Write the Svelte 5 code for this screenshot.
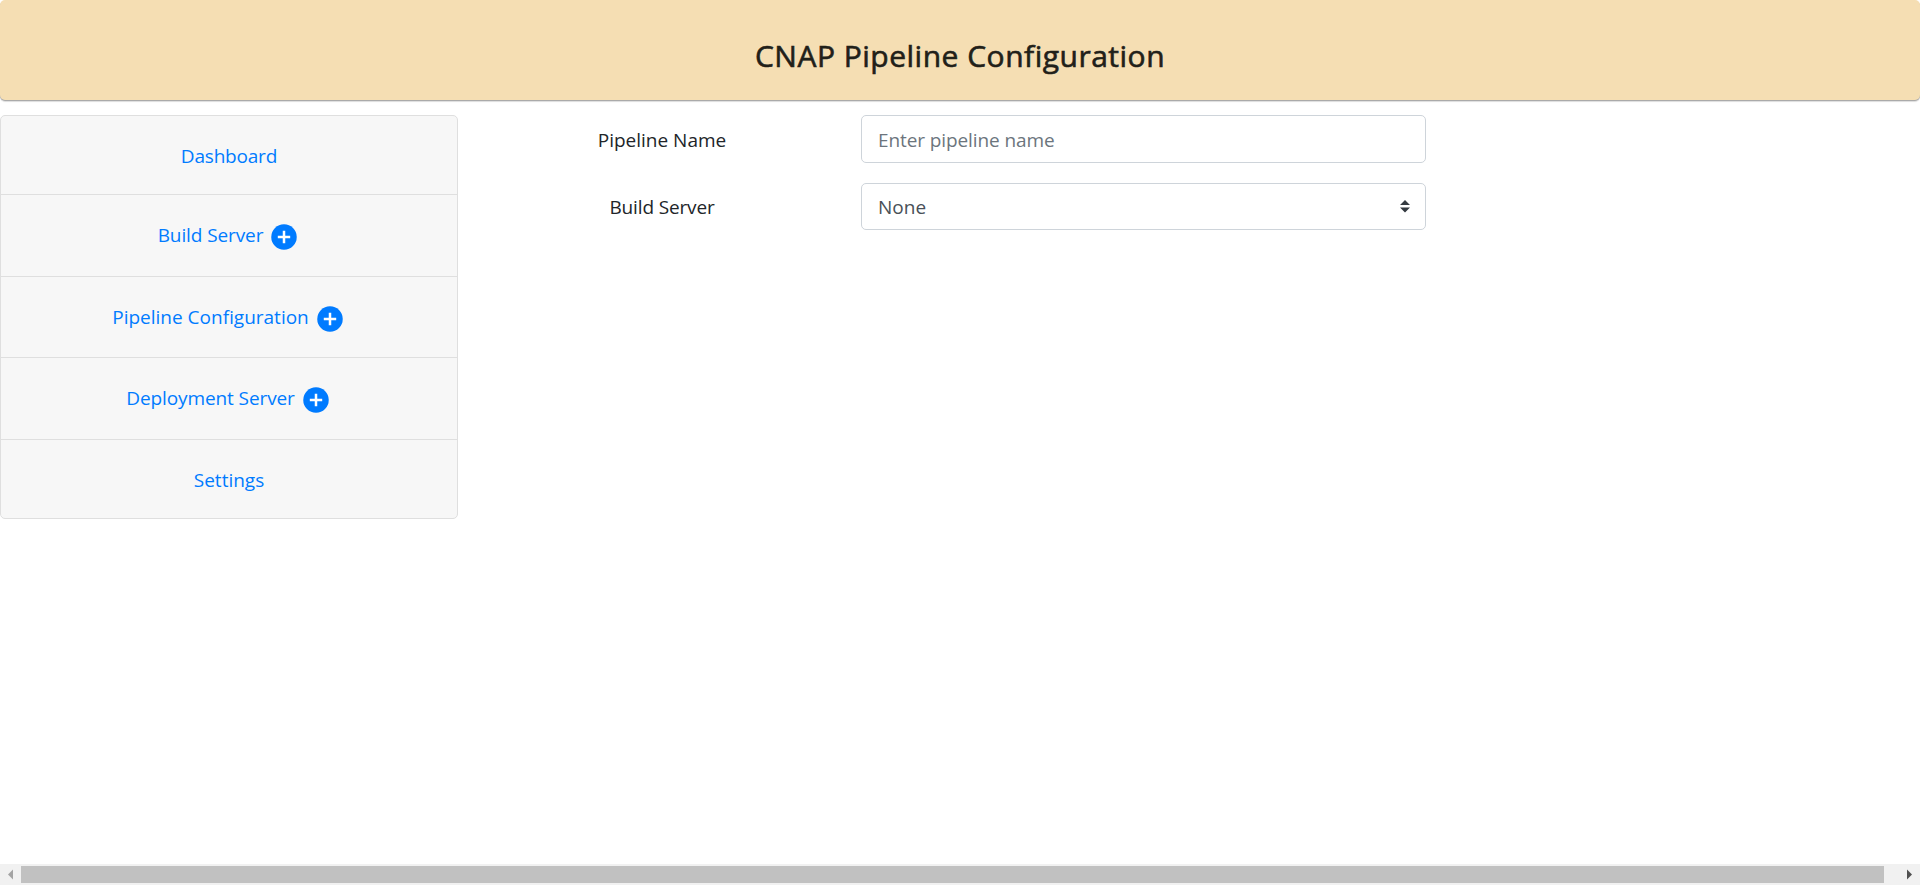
<script>
  const menu = [
    { label: 'Dashboard', size: 'short', plus: false },
    { label: 'Build Server', size: 'tall', plus: true },
    { label: 'Pipeline Configuration', size: 'mid', plus: true },
    { label: 'Deployment Server', size: 'tall', plus: true },
    { label: 'Settings', size: 'last', plus: false }
  ];
</script>

<div class="page">
  <header><h1>CNAP Pipeline Configuration</h1></header>
  <main>
    <nav>
      {#each menu as item}
        <div class="item {item.size}">
          <a href="#top">{item.label}</a>
          {#if item.plus}
            <svg class="plus" viewBox="0 0 26 26" aria-hidden="true">
              <circle cx="13" cy="13" r="12.75" fill="#007bff" />
              <path d="M13 6.8v12.4M6.8 13h12.4" stroke="#fff" stroke-width="2.5" />
            </svg>
          {/if}
        </div>
      {/each}
    </nav>
    <form>
      <div class="row first">
        <label for="name">Pipeline Name</label>
        <input id="name" type="text" placeholder="Enter pipeline name" />
      </div>
      <div class="row second">
        <label for="server">Build Server</label>
        <div class="select">
          <select id="server"><option>None</option></select>
          <svg class="caret" viewBox="0 0 4 5" aria-hidden="true"><path fill="#343a40" d="M2 0L0 2h4zm0 5L0 3h4z" /></svg>
        </div>
      </div>
    </form>
  </main>
  <footer>
    <svg class="arrow" viewBox="0 0 21 21"><path d="M13 5.5v10L8 10.5z" fill="#a3a3a3" /></svg>
    <div class="track"><div class="thumb"></div></div>
    <svg class="arrow" viewBox="0 0 21 21"><path d="M8 5.5v10l5-5z" fill="#505050" /></svg>
  </footer>
</div>

<style>
  :global(body) { margin: 0; background: #fff; overflow: hidden; }
  .page, .page * { box-sizing: border-box; }
  .page {
    height: 885px; display: flex; flex-direction: column;
    font-family: "Open Sans", "Noto Sans", sans-serif; font-size: 19px; color: #212529;
  }
  header {
    height: 100px; flex: none; display: flex; justify-content: center;
    background: #f5deb3; border-radius: 5px;
    box-shadow: 0 1px 0 #aaa, 0 2px 1px #ddd;
  }
  h1 {
    margin: 35px 0 0; font-size: 30px; line-height: 42px; font-weight: 500;
    letter-spacing: 0.5px; color: #212019; -webkit-text-stroke: 0.6px #212019;
  }
  main { flex: 1; display: flex; align-items: flex-start; padding-top: 15px; }
  nav {
    width: 458px; height: 404px; border: 1px solid #dfdfdf; border-radius: 5px;
    background: #f7f7f7; overflow: hidden;
  }
  .item {
    display: flex; align-items: center; justify-content: center; gap: 8px;
    height: 82px; border-bottom: 1px solid #dfdfdf; line-height: 28px;
    padding: 0 3px 1px 0; letter-spacing: -0.1px;
  }
  .short { height: 79px; padding: 1px 0 0; letter-spacing: -0.2px; }
  .mid { height: 81px; letter-spacing: 0; }
  .last { height: 78px; border: 0; padding: 1px 0 0; letter-spacing: 0; }
  a { color: #007bff; text-decoration: none; }
  .plus { width: 26px; height: 26px; margin-top: 4px; }
  form { margin-left: 89px; display: flex; flex-direction: column; gap: 20px; }
  .row { display: flex; height: 47px; align-items: center; }
  .first { height: 48px; }
  label { width: 230px; margin-right: 84px; text-align: center; line-height: 28px; }
  .first label { padding-top: 2px; }
  .second label { letter-spacing: -0.15px; }
  input, .select { width: 565px; height: 100%; border: 1px solid #ced4da; border-radius: 5px; background: #fff; }
  input, select { font: inherit; color: #495057; padding: 0 16px; outline: 0; }
  input { padding: 2px 16px 0; letter-spacing: -0.1px; }
  input::placeholder { color: #6c757d; opacity: 1; }
  .select { display: flex; align-items: center; padding-right: 15px; }
  select { appearance: none; border: 0; background: none; flex: 1; height: 100%; }
  .caret { width: 10px; height: 12.5px; }
  footer { height: 21px; flex: none; display: flex; background: #f1f1f1; }
  .arrow { width: 21px; height: 21px; }
  .track { flex: 1; padding: 2px 0; }
  .thumb { width: 1863px; height: 17px; background: #c1c1c1; }
</style>
